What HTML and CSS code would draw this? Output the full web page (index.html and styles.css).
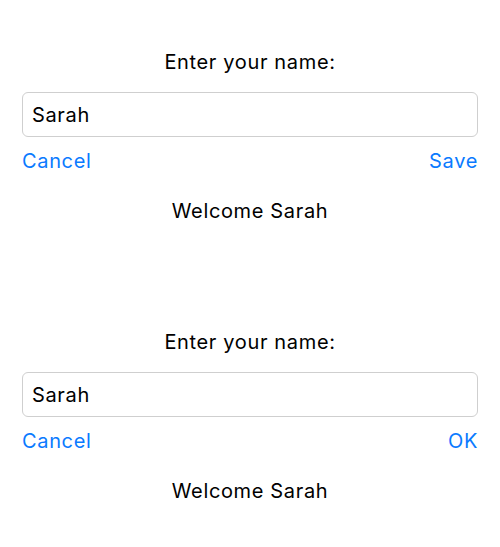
FILE: index.html
```html
<!DOCTYPE html>
<html>
<head>
<meta charset="utf-8">
<link rel="stylesheet" href="styles.css">
</head>
<body>
<div class="page">
  <section class="form">
    <div class="label">Enter your name:</div>
    <input class="field" type="text" value="Sarah">
    <div class="actions">
      <button class="btn">Cancel</button>
      <button class="btn">Save</button>
    </div>
    <div class="welcome">Welcome Sarah</div>
  </section>
  <section class="form">
    <div class="label">Enter your name:</div>
    <input class="field" type="text" value="Sarah">
    <div class="actions">
      <button class="btn">Cancel</button>
      <button class="btn">OK</button>
    </div>
    <div class="welcome">Welcome Sarah</div>
  </section>
</div>
</body>
</html>
```
FILE: styles.css
```css
html, body {
  margin: 0;
  padding: 0;
  background: #ffffff;
}
body {
  font-family: Inter, "Noto Sans", "Liberation Sans", sans-serif;
  font-size: 20px;
  line-height: 24px;
  letter-spacing: 0.65px;
  color: #000000;
}
.page {
  display: flex;
  flex-direction: column;
  gap: 107px;
  padding: 50px 22px 0;
}
.form {
  display: flex;
  flex-direction: column;
}
.label {
  text-align: center;
}
.field {
  box-sizing: border-box;
  margin-top: 18px;
  width: 100%;
  height: 45px;
  padding: 0 9px;
  border: 1px solid #cfcfcf;
  border-radius: 6px;
  font: inherit;
  letter-spacing: inherit;
  color: #000000;
  background: #ffffff;
  outline: none;
}
.actions {
  display: flex;
  justify-content: space-between;
  margin-top: 12px;
}
.btn {
  padding: 0;
  margin: 0;
  border: 0;
  background: none;
  font: inherit;
  letter-spacing: inherit;
  color: #0a7aff;
  cursor: pointer;
}
.welcome {
  text-align: center;
  margin-top: 26px;
}
```
